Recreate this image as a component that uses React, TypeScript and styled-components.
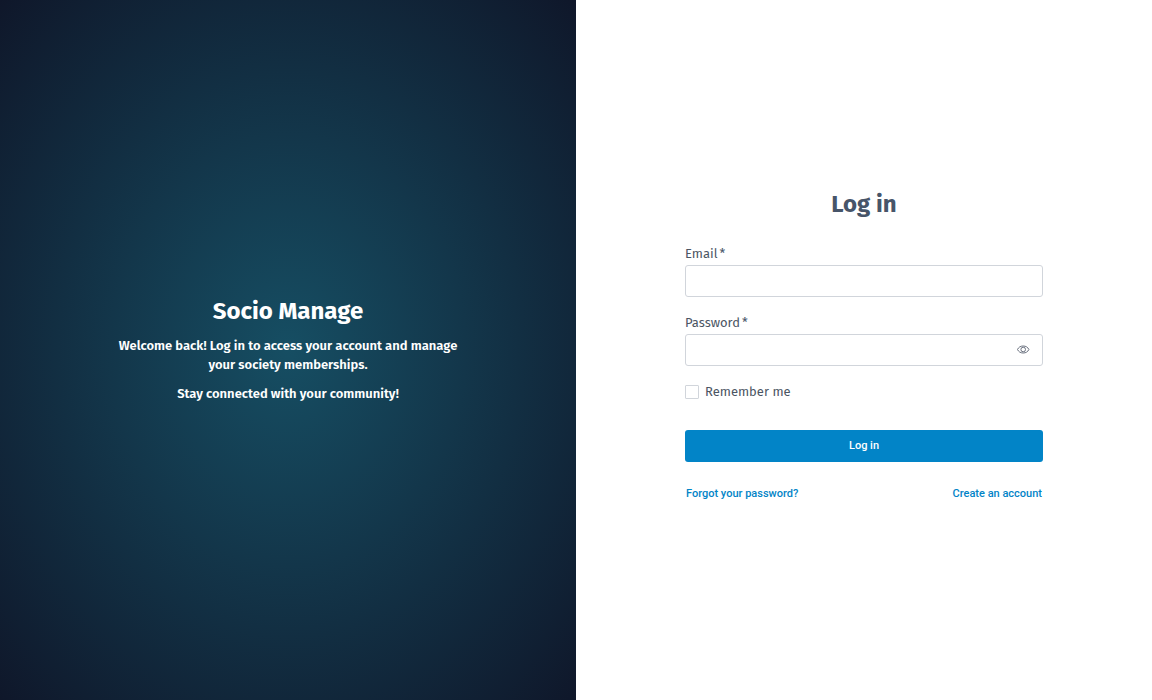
import React, { useState } from "react";
import styled, { createGlobalStyle } from "styled-components";

const GlobalStyle = createGlobalStyle`
  *, *::before, *::after { box-sizing: border-box; }
  body {
    margin: 0;
    background: #ffffff;
    color: #4b5563;
    font-family: "Fira Sans", "Noto Sans", sans-serif;
    font-size: 13px;
    line-height: 20px;
  }
  h1, h2, p { margin: 0; }
`;

const Page = styled.main`
  display: grid;
  grid-template-columns: 1fr 1fr;
  min-height: 100vh;
`;

const Welcome = styled.section`
  display: flex;
  flex-direction: column;
  align-items: center;
  justify-content: center;
  gap: 10px;
  padding: 24px 24px 26px;
  background: radial-gradient(ellipse at center, #164e63, #0f172a);
  color: #ffffff;
  text-align: center;
`;

const Brand = styled.h1`
  font-size: 24px;
  line-height: 30px;
  font-weight: 700;
`;

const Message = styled.p`
  max-width: 360px;
  font-weight: 600;
  line-height: 19px;
`;

const FormPanel = styled.section`
  display: flex;
  align-items: center;
  justify-content: center;
  padding: 24px 24px 26px;
`;

const Form = styled.form`
  display: flex;
  flex-direction: column;
  width: 100%;
  max-width: 358px;
`;

const Title = styled.h2`
  margin-bottom: 25px;
  color: #475569;
  font-size: 24px;
  line-height: 30px;
  font-weight: 700;
  text-align: center;
`;

const Field = styled.div`
  display: flex;
  flex-direction: column;
  gap: 2px;
  margin-bottom: 16px;
`;

const Label = styled.label`
  display: flex;
  gap: 2px;
  line-height: 19px;
`;

const Required = styled.span`
  color: #475569;
`;

const InputBox = styled.div`
  display: flex;
  align-items: center;
  height: 32px;
  border: 1px solid #d1d5db;
  border-radius: 3px;
  &:focus-within { border-color: #0284c7; }
`;

const Input = styled.input`
  flex: 1;
  min-width: 0;
  height: 100%;
  padding: 0 12px;
  border: 0;
  outline: 0;
  background: transparent;
  color: inherit;
  font: inherit;
`;

const EyeButton = styled.button`
  display: flex;
  margin-right: 12px;
  padding: 0;
  border: 0;
  background: none;
  color: #6b7280;
  cursor: pointer;
`;

const Remember = styled.label`
  display: flex;
  align-items: center;
  gap: 6px;
  margin-bottom: 28px;
`;

const Checkbox = styled.input`
  appearance: none;
  width: 14px;
  height: 14px;
  margin: 0;
  border: 1px solid #d1d5db;
  border-radius: 1px;
  &:checked { background: #0284c7; border-color: #0284c7; }
`;

const Submit = styled.button`
  height: 32px;
  border: 0;
  border-radius: 3px;
  background: #0284c7;
  color: #ffffff;
  font: 500 11px/16px Roboto, sans-serif;
  cursor: pointer;
`;

const Links = styled.nav`
  display: flex;
  justify-content: space-between;
  margin-top: 16px;
  padding: 0 1px;
`;

const TextLink = styled.a`
  color: #0284c7;
  font: 500 11px/32px Roboto, sans-serif;
  text-decoration: none;
`;

function EyeIcon() {
  return (
    <svg width="14" height="14" viewBox="0 0 14 14" fill="none" stroke="currentColor" aria-hidden="true">
      <path d="M1.500 6.500C2.600 4.200 4.500 3 7.200 3s4.600 1.200 5.700 3.500c-1.100 2.300-3 3.500-5.700 3.500S2.600 8.800 1.500 6.500Z" />
      <circle cx="7.200" cy="6.500" r="2.300" />
    </svg>
  );
}

export default function App() {
  const [visible, setVisible] = useState(false);
  return (
    <>
      <GlobalStyle />
      <Page>
        <Welcome>
          <Brand>Socio Manage</Brand>
          <Message>Welcome back! Log in to access your account and manage your society memberships.</Message>
          <Message>Stay connected with your community!</Message>
        </Welcome>
        <FormPanel>
          <Form onSubmit={(event) => event.preventDefault()}>
            <Title>Log in</Title>
            <Field>
              <Label htmlFor="email">Email<Required>*</Required></Label>
              <InputBox>
                <Input id="email" type="email" required />
              </InputBox>
            </Field>
            <Field>
              <Label htmlFor="password">Password<Required>*</Required></Label>
              <InputBox>
                <Input id="password" type={visible ? "text" : "password"} required />
                <EyeButton type="button" aria-label="Show password" onClick={() => setVisible(!visible)}>
                  <EyeIcon />
                </EyeButton>
              </InputBox>
            </Field>
            <Remember>
              <Checkbox type="checkbox" />
              Remember me
            </Remember>
            <Submit type="submit">Log in</Submit>
            <Links>
              <TextLink href="#forgot">Forgot your password?</TextLink>
              <TextLink href="#register">Create an account</TextLink>
            </Links>
          </Form>
        </FormPanel>
      </Page>
    </>
  );
}
